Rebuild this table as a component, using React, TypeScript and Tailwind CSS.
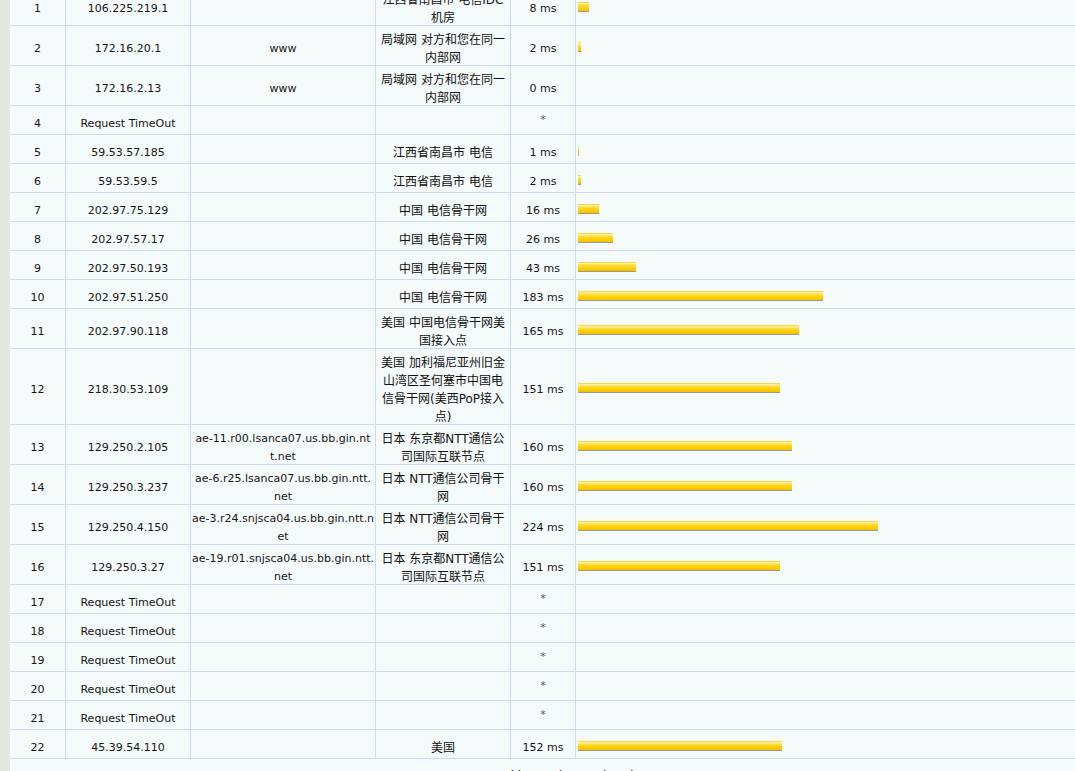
import React from "react";

type Hop = {
  n: number;
  ip?: string;
  host?: string[];
  loc?: string[];
  ms?: number;
};

const hops: Hop[] = [
  { n: 1, ip: "106.225.219.1", loc: ["江西省南昌市 电信IDC", "机房"], ms: 8 },
  { n: 2, ip: "172.16.20.1", host: ["www"], loc: ["局域网 对方和您在同一", "内部网"], ms: 2 },
  { n: 3, ip: "172.16.2.13", host: ["www"], loc: ["局域网 对方和您在同一", "内部网"], ms: 0 },
  { n: 4 },
  { n: 5, ip: "59.53.57.185", loc: ["江西省南昌市 电信"], ms: 1 },
  { n: 6, ip: "59.53.59.5", loc: ["江西省南昌市 电信"], ms: 2 },
  { n: 7, ip: "202.97.75.129", loc: ["中国 电信骨干网"], ms: 16 },
  { n: 8, ip: "202.97.57.17", loc: ["中国 电信骨干网"], ms: 26 },
  { n: 9, ip: "202.97.50.193", loc: ["中国 电信骨干网"], ms: 43 },
  { n: 10, ip: "202.97.51.250", loc: ["中国 电信骨干网"], ms: 183 },
  { n: 11, ip: "202.97.90.118", loc: ["美国 中国电信骨干网美", "国接入点"], ms: 165 },
  {
    n: 12,
    ip: "218.30.53.109",
    loc: ["美国 加利福尼亚州旧金", "山湾区圣何塞市中国电", "信骨干网(美西PoP接入", "点)"],
    ms: 151,
  },
  {
    n: 13,
    ip: "129.250.2.105",
    host: ["ae-11.r00.lsanca07.us.bb.gin.nt", "t.net"],
    loc: ["日本 东京都NTT通信公", "司国际互联节点"],
    ms: 160,
  },
  {
    n: 14,
    ip: "129.250.3.237",
    host: ["ae-6.r25.lsanca07.us.bb.gin.ntt.", "net"],
    loc: ["日本 NTT通信公司骨干", "网"],
    ms: 160,
  },
  {
    n: 15,
    ip: "129.250.4.150",
    host: ["ae-3.r24.snjsca04.us.bb.gin.ntt.n", "et"],
    loc: ["日本 NTT通信公司骨干", "网"],
    ms: 224,
  },
  {
    n: 16,
    ip: "129.250.3.27",
    host: ["ae-19.r01.snjsca04.us.bb.gin.ntt.", "net"],
    loc: ["日本 东京都NTT通信公", "司国际互联节点"],
    ms: 151,
  },
  { n: 17 },
  { n: 18 },
  { n: 19 },
  { n: 20 },
  { n: 21 },
  { n: 22, ip: "45.39.54.110", loc: ["美国"], ms: 152 },
];

const cell =
  "flex flex-col items-center justify-center text-center pt-[3px] border-r border-[#d0dbec] leading-[18px]";

function Inner({ children }: { children: React.ReactNode }) {
  return <div className="mt-[2px] -mb-[2px] flex flex-col items-center">{children}</div>;
}

function Lines({ lines }: { lines?: string[] }) {
  if (!lines) return null;
  return (
    <Inner>
      {lines.map((l, i) => (
        <span key={i} className="block whitespace-nowrap">
          {l}
        </span>
      ))}
    </Inner>
  );
}

function Row({ h }: { h: Hop }) {
  const timeout = !h.ip;
  const w = h.ms ? Math.max(1, Math.round(h.ms * 1.34)) : 0;
  return (
    <div className="grid grid-cols-[56px_125px_185px_135px_65px_1fr] min-h-[29px] border-b border-[#d0dbec]">
      <div className={cell}>
        <Inner>{h.n}</Inner>
      </div>
      <div className={cell}>
        <Inner>{timeout ? "Request TimeOut" : h.ip}</Inner>
      </div>
      <div className={cell}>
        <Lines lines={h.host} />
      </div>
      <div
        className={cell + " text-[12px] text-[#111]"}
        style={{ fontFamily: "'DejaVu Sans','Noto Sans CJK SC',sans-serif" }}
      >
        <Lines lines={h.loc} />
      </div>
      <div className={cell}>
        {timeout ? (
          <span className="text-[#4a5684] text-[11px] leading-[10px] -mt-[4px]">*</span>
        ) : (
          <Inner>
            <span className="whitespace-nowrap">{h.ms} ms</span>
          </Inner>
        )}
      </div>
      <div className="flex items-center pl-[2px] pt-[3px]">
        {w > 0 && (
          <div
            className="h-[10px] border-b border-[#9a9a9a] bg-[linear-gradient(to_bottom,#f7cd00_0%,#fff1a6_16%,#ffdc40_38%,#ffcf00_70%,#f3c200_100%)]"
            style={{ width: w }}
          />
        )}
      </div>
    </div>
  );
}

export default function App() {
  return (
    <div
      className="flex h-[771px] w-full overflow-hidden bg-[#f5fafa] text-[11px] text-[#151515]"
      style={{ fontFamily: "'DejaVu Sans','Noto Sans CJK SC',sans-serif" }}
    >
      <div className="w-[10px] shrink-0 bg-[#e3e8e2]" />
      <div className="flex-1 -mt-[14px]">
        {hops.map((h) => (
          <Row key={h.n} h={h} />
        ))}
        <div className="pt-[8px] text-center text-[12px] leading-[18px]">
          route tracking Task completed
        </div>
      </div>
    </div>
  );
}
